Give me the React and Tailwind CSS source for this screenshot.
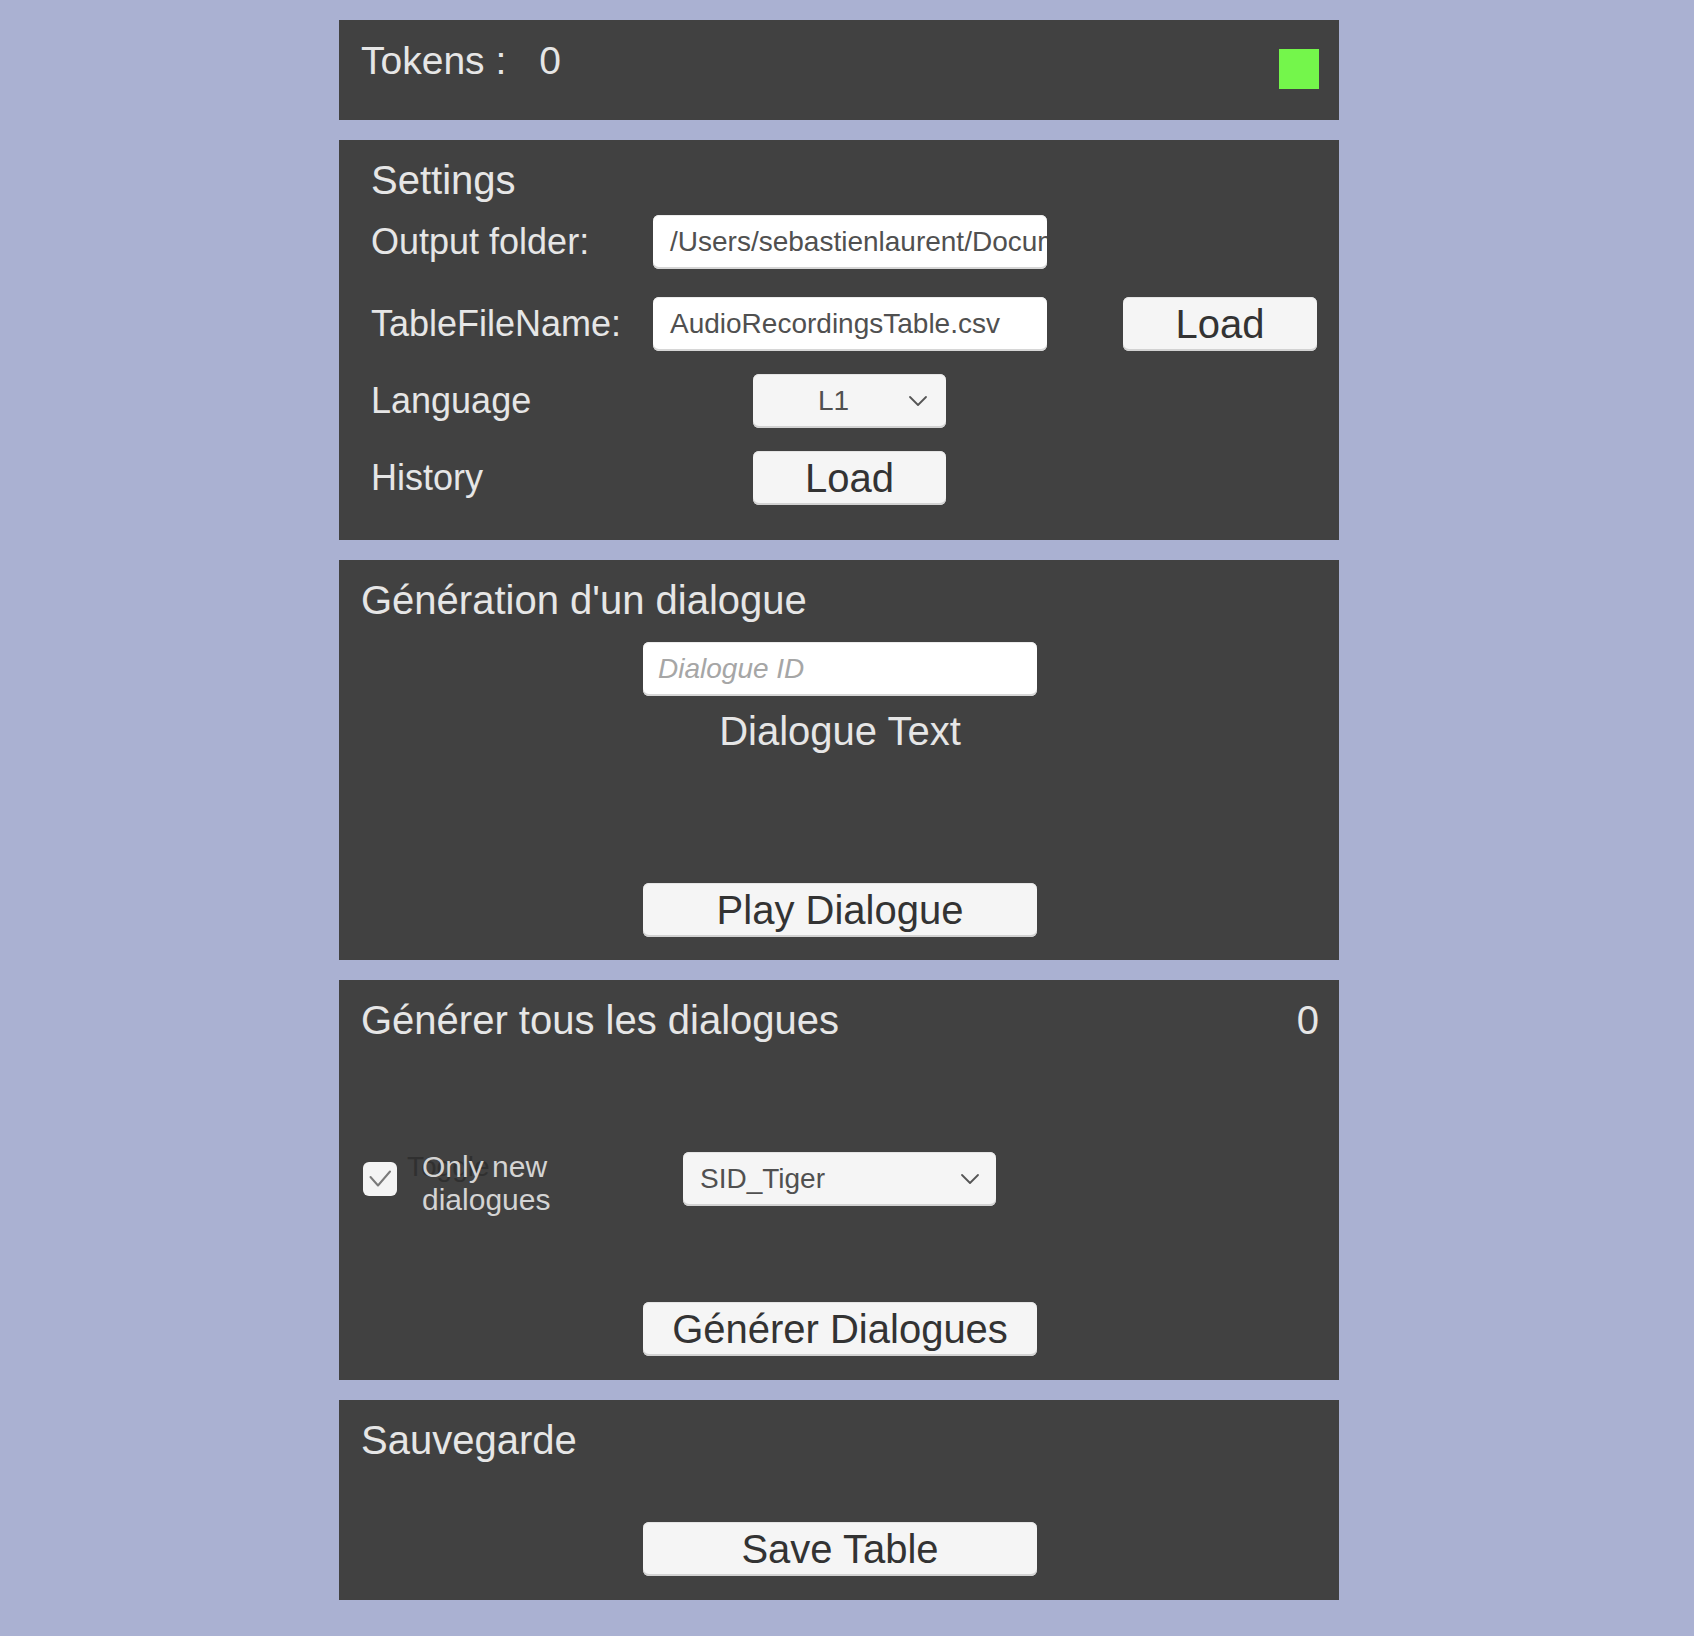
import React from "react";

const FONT = { fontFamily: '"Liberation Sans", Arial, sans-serif' };

function Chevron() {
  return (
    <svg width="20" height="12" viewBox="0 0 20 12" className="shrink-0">
      <polyline points="2,2 10,10 18,2" fill="none" stroke="#555555" strokeWidth="1.8" strokeLinecap="round" strokeLinejoin="round" />
    </svg>
  );
}

function Button({ children, className = "" }) {
  return (
    <div className={"h-[54px] rounded-[6px] bg-[#f5f5f5] shadow-[inset_0_-2px_0_#d2d2d2,inset_0_1px_0_#e4e4e4] text-center text-[40px] leading-[54px] text-[#333333] " + className}>
      {children}
    </div>
  );
}

function Input({ children, className = "" }) {
  return (
    <div className={"h-[54px] w-[394px] overflow-hidden whitespace-nowrap rounded-[6px] bg-white pl-[17px] pr-[2px] text-[28px] leading-[54px] text-[#505050] shadow-[inset_0_-2px_0_#d6d6d6,inset_0_1px_0_#ececec] " + className}>
      {children}
    </div>
  );
}

export default function App() {
  return (
    <div style={FONT} className="min-h-screen h-[1636px] w-full bg-[#aab1d2] pt-5">
      <div className="ml-[339px] flex w-[1000px] flex-col gap-5 text-[#e6e6e6]">
        {/* Tokens */}
        <div className="flex h-[100px] items-start justify-between bg-[#414141]">
          <div className="ml-[22px] mt-[21px] whitespace-nowrap text-[39px] leading-[39px]">
            Tokens :<span className="ml-[33px]">0</span>
          </div>
          <div className="mr-[20px] mt-[29px] h-10 w-10 bg-[#74f64b]" />
        </div>

        {/* Settings */}
        <div className="h-[400px] bg-[#414141] pl-[32px] pt-[20px]">
          <div className="text-[40px] leading-[40px]">Settings</div>
          <div className="mt-[15px] flex h-[54px] items-center">
            <div className="w-[282px] text-[36px] leading-[54px]">Output folder:</div>
            <Input>/Users/sebastienlaurent/Documents/AudioRecordings</Input>
          </div>
          <div className="mt-[28px] flex h-[54px] items-center">
            <div className="w-[282px] text-[36px] leading-[54px]">TableFileName:</div>
            <Input>AudioRecordingsTable.csv</Input>
            <Button className="ml-[76px] w-[194px]">Load</Button>
          </div>
          <div className="mt-[23px] flex h-[54px] items-center">
            <div className="w-[382px] text-[36px] leading-[54px]">Language</div>
            <div className="flex h-[54px] w-[193px] items-center rounded-[6px] bg-[#f5f5f5] shadow-[inset_0_-2px_0_#d2d2d2,inset_0_1px_0_#e4e4e4]">
              <div className="flex-1 pl-[10px] pr-[4px] text-center text-[28px] leading-[54px] text-[#505050]">L1</div>
              <div className="mr-[18px]"><Chevron /></div>
            </div>
          </div>
          <div className="mt-[23px] flex h-[54px] items-center">
            <div className="w-[382px] text-[36px] leading-[54px]">History</div>
            <Button className="w-[193px]">Load</Button>
          </div>
        </div>

        {/* Génération d'un dialogue */}
        <div className="h-[400px] bg-[#414141] pt-[20px]">
          <div className="pl-[22px] text-[40px] leading-[40px]">Génération d'un dialogue</div>
          <Input className="ml-[304px] mt-[22px] !pl-[15px] italic !text-[#a6a6a6]">Dialogue ID</Input>
          <div className="ml-[304px] mt-[15px] w-[394px] text-center text-[40px] leading-[40px]">Dialogue Text</div>
          <Button className="ml-[304px] mt-[132px] w-[394px]">Play Dialogue</Button>
        </div>

        {/* Générer tous les dialogues */}
        <div className="h-[400px] bg-[#414141] pt-[20px]">
          <div className="flex justify-between pl-[22px] pr-[20px] text-[40px] leading-[40px]">
            <span>Générer tous les dialogues</span>
            <span>0</span>
          </div>
          <div className="mt-[112px] flex h-[54px] items-center">
            <div className="relative ml-[24px] flex w-[320px] items-center">
              <div className="flex h-[34px] w-[34px] shrink-0 items-center justify-center rounded-[6px] bg-[#f4f4f4]">
                <svg width="34" height="34" viewBox="0 0 34 34">
                  <polyline points="7.5,15 15,23.5 27,9.5" fill="none" stroke="#7a7a7a" strokeWidth="2" strokeLinecap="round" strokeLinejoin="round" />
                </svg>
              </div>
              <div className="absolute left-[44px] top-[-2px] text-[28px] leading-[54px] text-[#303030]">Toggle</div>
              <div className="relative ml-[25px] mt-[8px] text-[30px] leading-[33px] text-[#d4d4d4]">
                Only new
                <br />
                dialogues
              </div>
            </div>
            <div className="flex h-[54px] w-[313px] items-center justify-between rounded-[6px] bg-[#f5f5f5] pl-[17px] pr-[16px] shadow-[inset_0_-2px_0_#d2d2d2,inset_0_1px_0_#e4e4e4]">
              <span className="text-[28px] leading-[54px] text-[#505050]">SID_Tiger</span>
              <Chevron />
            </div>
          </div>
          <Button className="ml-[304px] mt-[96px] w-[394px]">Générer Dialogues</Button>
        </div>

        {/* Sauvegarde */}
        <div className="h-[200px] bg-[#414141] pt-[20px]">
          <div className="pl-[22px] text-[40px] leading-[40px]">Sauvegarde</div>
          <Button className="ml-[304px] mt-[62px] w-[394px]">Save Table</Button>
        </div>
      </div>
    </div>
  );
}
